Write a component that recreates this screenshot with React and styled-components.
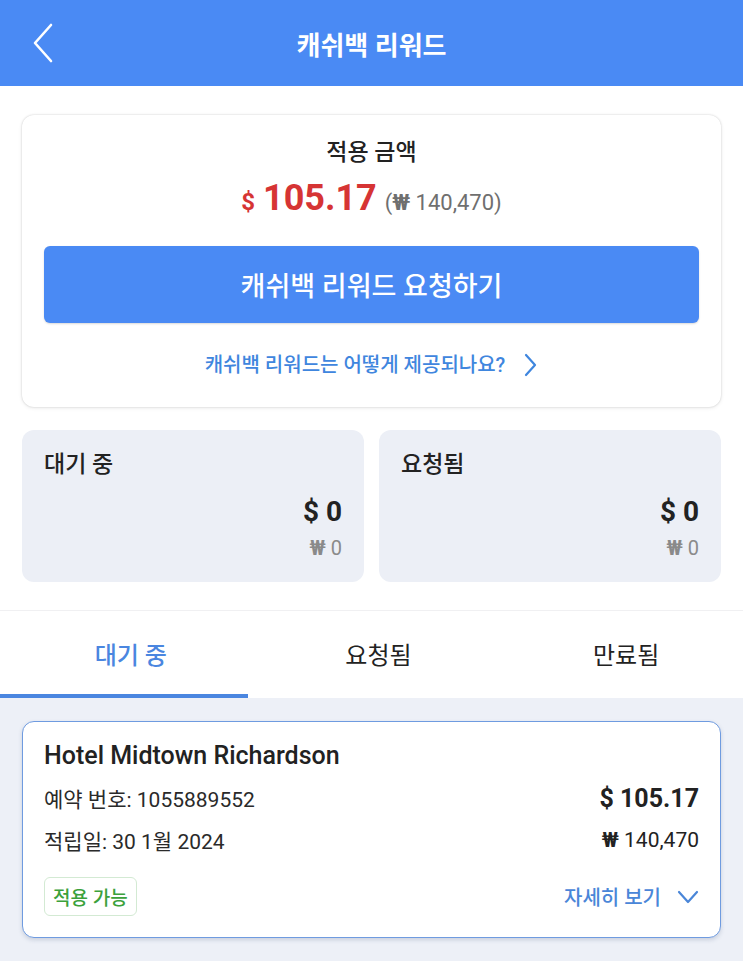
import styled, { createGlobalStyle } from "styled-components";

const GlobalStyle = createGlobalStyle`
    body {
        margin: 0;
        background: #ffffff;
        font-family: Roboto, "Noto Sans CJK KR", sans-serif;
        color: #222222;
    }
`;

const Page = styled.div`
    width: 743px;
    min-height: 961px;
    display: flex;
    flex-direction: column;
`;

const Header = styled.header`
    height: 86px;
    background: #4a8af4;
    display: flex;
    align-items: center;
    justify-content: center;
    position: relative;
`;

const BackButton = styled.button`
    position: absolute;
    left: 28px;
    top: 21px;
    width: 30px;
    height: 44px;
    padding: 0;
    border: 0;
    background: none;
    display: flex;
    align-items: center;
    justify-content: center;
`;

const HeaderTitle = styled.h1`
    margin: 0;
    font-size: 26px;
    font-weight: 700;
    color: #ffffff;
`;

const Top = styled.section`
    padding: 29px 22px 0;
`;

const SummaryCard = styled.div`
    background: #ffffff;
    border-radius: 12px;
    box-shadow: 0 0 2px rgba(0, 0, 0, 0.18), 0 1px 4px rgba(0, 0, 0, 0.08);
    padding: 23px 22px 29px;
    display: flex;
    flex-direction: column;
    align-items: center;
`;

const SummaryLabel = styled.div`
    font-size: 23px;
    line-height: 30px;
    font-weight: 500;
`;

const AmountLine = styled.div`
    margin-top: 9px;
    height: 44px;
    display: flex;
    align-items: baseline;
    gap: 8px;
    color: #d63434;
`;

const Currency = styled.span`
    font-size: 24px;
    font-weight: 700;
`;

const BigAmount = styled.span`
    font-size: 36px;
    font-weight: 700;
`;

const SubAmount = styled.span`
    font-size: 22px;
    color: #6f6f6f;
`;

const Won = styled.span`
    font-weight: 700;
`;

const PrimaryButton = styled.button`
    margin-top: 25px;
    width: 100%;
    height: 77px;
    border: 0;
    border-radius: 6px;
    background: #4a8af4;
    color: #ffffff;
    font-family: inherit;
    font-size: 27px;
    font-weight: 500;
    box-shadow: 0 1px 2px rgba(0, 0, 0, 0.15);
`;

const HelpLink = styled.a`
    margin-top: 29px;
    display: flex;
    align-items: center;
    gap: 18px;
    font-size: 20px;
    line-height: 26px;
    font-weight: 500;
    color: #3f86de;
    text-decoration: none;
`;

const StatRow = styled.div`
    margin-top: 23px;
    display: grid;
    grid-template-columns: 1fr 1fr;
    gap: 15px;
`;

const StatCard = styled.div`
    background: #eceff6;
    border-radius: 12px;
    padding: 20px 22px 22px;
    display: flex;
    flex-direction: column;
`;

const StatLabel = styled.div`
    font-size: 23px;
    line-height: 30px;
    font-weight: 500;
`;

const StatValue = styled.div`
    margin-top: 15px;
    align-self: flex-end;
    font-size: 28px;
    line-height: 34px;
    font-weight: 700;
`;

const StatSub = styled.div`
    margin-top: 7px;
    align-self: flex-end;
    font-size: 20px;
    line-height: 24px;
    color: #8a8a8a;
`;

const Tabs = styled.nav`
    margin-top: 28px;
    border-top: 1px solid #f0f0f2;
    display: grid;
    grid-template-columns: repeat(3, 1fr);
`;

const Tab = styled.div`
    box-sizing: border-box;
    height: 87px;
    padding: 2px 0 0 14px;
    display: flex;
    align-items: center;
    justify-content: center;
    font-size: 24px;
    font-weight: ${({ $active }) => ($active ? 500 : 400)};
    color: ${({ $active }) => ($active ? "#4a86e0" : "#222222")};
    border-bottom: 4px solid ${({ $active }) => ($active ? "#4a86e0" : "transparent")};
`;

const ListArea = styled.section`
    flex: 1;
    background: #edf0f7;
    padding: 23px 22px;
`;

const RewardCard = styled.div`
    background: #ffffff;
    border: 1.5px solid #6f9be0;
    border-radius: 12px;
    box-shadow: 0 2px 4px rgba(60, 80, 120, 0.2);
    padding: 19px 21px 21px;
`;

const HotelName = styled.div`
    font-size: 25px;
    line-height: 30px;
    font-weight: 500;
`;

const InfoRow = styled.div`
    margin-top: ${({ $gap }) => $gap}px;
    display: flex;
    justify-content: space-between;
    align-items: center;
    height: 32px;
`;

const InfoText = styled.span`
    font-size: 21px;
    color: #2a2a2a;
`;

const InfoAmount = styled.span`
    font-size: ${({ $big }) => ($big ? 25 : 21)}px;
    font-weight: ${({ $big }) => ($big ? 700 : 400)};
`;

const FooterRow = styled.div`
    margin-top: 21px;
    display: flex;
    justify-content: space-between;
    align-items: center;
`;

const Badge = styled.span`
    height: 37px;
    padding: 0 8px;
    display: inline-flex;
    align-items: center;
    border: 1px solid #d3ead3;
    border-radius: 6px;
    font-size: 19px;
    font-weight: 500;
    color: #3ba13b;
`;

const DetailToggle = styled.span`
    display: flex;
    align-items: center;
    gap: 16px;
    font-size: 20px;
    font-weight: 500;
    color: #4a86d8;
`;

const Chevron = ({ dir, color, size, stroke }) => {
    const paths = {
        left: "M20 3 L4 21 L20 39",
        right: "M3 3 L12 13 L3 23",
        down: "M2 3 L11 13 L20 3",
    };
    const boxes = { left: "0 0 24 42", right: "0 0 15 26", down: "0 0 22 16" };
    return (
        <svg width={size[0]} height={size[1]} viewBox={boxes[dir]} fill="none">
            <path d={paths[dir]} stroke={color} strokeWidth={stroke} strokeLinecap="round" strokeLinejoin="round" />
        </svg>
    );
};

const stats = [
    { label: "대기 중", usd: "$ 0", krw: "0" },
    { label: "요청됨", usd: "$ 0", krw: "0" },
];

const tabs = ["대기 중", "요청됨", "만료됨"];

export default function App() {
    return (
        <Page>
            <GlobalStyle />
            <Header>
                <BackButton aria-label="뒤로">
                    <Chevron dir="left" color="#ffffff" size={[24, 42]} stroke={2.6} />
                </BackButton>
                <HeaderTitle>캐쉬백 리워드</HeaderTitle>
            </Header>

            <Top>
                <SummaryCard>
                    <SummaryLabel>적용 금액</SummaryLabel>
                    <AmountLine>
                        <Currency>$</Currency>
                        <BigAmount>105.17</BigAmount>
                        <SubAmount>
                            (<Won>₩</Won> 140,470)
                        </SubAmount>
                    </AmountLine>
                    <PrimaryButton>캐쉬백 리워드 요청하기</PrimaryButton>
                    <HelpLink href="#">
                        캐쉬백 리워드는 어떻게 제공되나요?
                        <Chevron dir="right" color="#3f86de" size={[15, 26]} stroke={2.2} />
                    </HelpLink>
                </SummaryCard>

                <StatRow>
                    {stats.map((s) => (
                        <StatCard key={s.label}>
                            <StatLabel>{s.label}</StatLabel>
                            <StatValue>{s.usd}</StatValue>
                            <StatSub>
                                <Won>₩</Won> {s.krw}
                            </StatSub>
                        </StatCard>
                    ))}
                </StatRow>
            </Top>

            <Tabs>
                {tabs.map((t, i) => (
                    <Tab key={t} $active={i === 0}>
                        {t}
                    </Tab>
                ))}
            </Tabs>

            <ListArea>
                <RewardCard>
                    <HotelName>Hotel Midtown Richardson</HotelName>
                    <InfoRow $gap={11}>
                        <InfoText>예약 번호: 1055889552</InfoText>
                        <InfoAmount $big>$ 105.17</InfoAmount>
                    </InfoRow>
                    <InfoRow $gap={10}>
                        <InfoText>적립일: 30 1월 2024</InfoText>
                        <InfoAmount>
                            <Won>₩</Won> 140,470
                        </InfoAmount>
                    </InfoRow>
                    <FooterRow>
                        <Badge>적용 가능</Badge>
                        <DetailToggle>
                            자세히 보기
                            <Chevron dir="down" color="#4a86d8" size={[22, 16]} stroke={2.2} />
                        </DetailToggle>
                    </FooterRow>
                </RewardCard>
            </ListArea>
        </Page>
    );
}
